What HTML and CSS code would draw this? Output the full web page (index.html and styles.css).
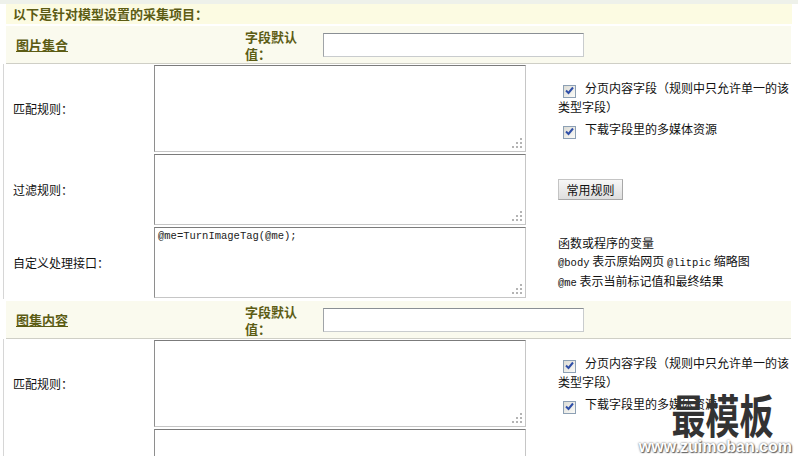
FILE: index.html
```html
<html lang="zh-CN">
<head>
    <meta charset="UTF-8">
    <title>采集项目设置</title>
    <link rel="stylesheet" href="styles.css">
</head>
<body>

    <div class="topo"></div>
    <div class="titulo">以下是针对模型设置的采集项目：</div>

    <!-- 图片集合 -->
    <div class="campo-cab">
        <a class="campo-nome" href="#">图片集合</a>
        <span class="campo-rotulo">字段默认值：</span>
        <input class="campo-input" type="text">
    </div>

    <div class="linha">
        <div class="rotulo">匹配规则：</div>
        <div class="celula"><textarea class="area alta"></textarea></div>
        <div class="extra">
            <p class="opcao"><span class="cb"><svg width="9" height="9" viewBox="0 0 9 9"><path d="M1 4.5 L3.5 7 L8 1.5" fill="none" stroke="#2f4fa8" stroke-width="2"/></svg></span>分页内容字段（规则中只允许单一的该类型字段）</p>
            <p class="opcao"><span class="cb"><svg width="9" height="9" viewBox="0 0 9 9"><path d="M1 4.5 L3.5 7 L8 1.5" fill="none" stroke="#2f4fa8" stroke-width="2"/></svg></span>下载字段里的多媒体资源</p>
        </div>
    </div>

    <div class="linha">
        <div class="rotulo">过滤规则：</div>
        <div class="celula"><textarea class="area"></textarea></div>
        <div class="extra">
            <button class="botao">常用规则</button>
        </div>
    </div>

    <div class="linha">
        <div class="rotulo">自定义处理接口：</div>
        <div class="celula"><textarea class="area">@me=TurnImageTag(@me);</textarea></div>
        <div class="extra dica">
            函数或程序的变量<br>
            <code>@body</code> 表示原始网页 <code>@litpic</code> 缩略图<br>
            <code>@me</code> 表示当前标记值和最终结果
        </div>
    </div>

    <!-- 图集内容 -->
    <div class="campo-cab">
        <a class="campo-nome" href="#">图集内容</a>
        <span class="campo-rotulo">字段默认值：</span>
        <input class="campo-input" type="text">
    </div>

    <div class="linha">
        <div class="rotulo">匹配规则：</div>
        <div class="celula"><textarea class="area alta"></textarea></div>
        <div class="extra">
            <p class="opcao"><span class="cb"><svg width="9" height="9" viewBox="0 0 9 9"><path d="M1 4.5 L3.5 7 L8 1.5" fill="none" stroke="#2f4fa8" stroke-width="2"/></svg></span>分页内容字段（规则中只允许单一的该类型字段）</p>
            <p class="opcao"><span class="cb"><svg width="9" height="9" viewBox="0 0 9 9"><path d="M1 4.5 L3.5 7 L8 1.5" fill="none" stroke="#2f4fa8" stroke-width="2"/></svg></span>下载字段里的多媒体资源</p>
        </div>
    </div>

    <div class="linha">
        <div class="rotulo"></div>
        <div class="celula"><textarea class="area"></textarea></div>
        <div class="extra"></div>
    </div>

    <div class="marca">
        <div class="marca-nome">最模板</div>
        <div class="marca-url">www.zuimoban.com</div>
    </div>

</body>
</html>
```

FILE: styles.css
```css
body {
    margin: 0;
    height: 456px;
    font-family: "Noto Sans CJK SC", "Liberation Sans", sans-serif;
    font-size: 12px;
    color: #111;
    background: #fff;
    overflow: hidden;
}
.topo {
    height: 4px;
    background: #eef1ea;
}
.titulo {
    margin-left: 6px;
    width: 779px;
    height: 20px;
    line-height: 20px;
    padding-left: 7px;
    background: #fcfbe2;
    color: #5c5c14;
    font-size: 13px;
    font-weight: bold;
}
.campo-cab {
    display: flex;
    align-items: center;
    margin: 2px 0 0 6px;
    width: 785px;
    height: 37px;
    background: #fafaee;
    border-bottom: 1px solid #cfcfc6;
    color: #5c5c14;
    font-size: 13px;
    font-weight: bold;
}
.campo-nome {
    width: 229px;
    padding-left: 10px;
    color: #5c5c14;
    text-decoration: underline;
}
.campo-rotulo {
    width: 56px;
    margin-right: 22px;
    line-height: 17px;
}
.campo-input {
    width: 261px;
    height: 24px;
    box-sizing: border-box;
    border: 1px solid;
    border-color: #8a8f94 #c9ccce #c9ccce #a0a4a8;
    background: #fff;
}
.linha {
    display: grid;
    grid-template-columns: 150px 372px 1fr;
    align-items: center;
    margin-left: 3px;
    border-left: 1px solid #d6d6d6;
}
.rotulo {
    padding-left: 9px;
}
.celula {
    display: flex;
}
/* grip de pontinhos no canto, no lugar do padrão do navegador */
.area {
    width: 100%;
    height: 71px;
    margin: 1px 0;
    box-sizing: border-box;
    border: 1px solid;
    border-color: #7b7b7b #c6c6c6 #c6c6c6 #8e8e8e;
    padding: 2px 3px;
    font-family: "Liberation Mono", monospace;
    font-size: 10.5px;
    color: #222;
    resize: none;
    background-color: #fff;
    background-image:
        linear-gradient(#b4b4b4, #b4b4b4),
        linear-gradient(#b4b4b4, #b4b4b4),
        linear-gradient(#b4b4b4, #b4b4b4),
        linear-gradient(#b4b4b4, #b4b4b4),
        linear-gradient(#b4b4b4, #b4b4b4),
        linear-gradient(#b4b4b4, #b4b4b4);
    background-size: 2px 2px;
    background-repeat: no-repeat;
    background-position:
        right 3px bottom 3px,
        right 7px bottom 3px,
        right 11px bottom 3px,
        right 3px bottom 7px,
        right 7px bottom 7px,
        right 3px bottom 11px;
}
.alta {
    height: 87px;
}
.extra {
    padding-left: 32px;
    width: 232px;
    line-height: 18px;
}
.opcao {
    margin: 0;
}
.opcao + .opcao {
    margin-top: 4px;
}
.cb {
    display: inline-block;
    vertical-align: -2px;
    width: 11px;
    height: 11px;
    margin: 0 9px 0 5px;
    border: 1px solid #8da0b4;
    background: linear-gradient(135deg, #dcdcd6, #fbfbf8);
    text-align: center;
    line-height: 11px;
}
.cb svg {
    vertical-align: 0;
}
.botao {
    width: 65px;
    height: 21px;
    padding: 0;
    border: 1px solid #c4c4c4;
    border-right-color: #a8a8a8;
    border-bottom-color: #a8a8a8;
    background: linear-gradient(#f7f7f7, #dedede);
    font-family: "Noto Sans CJK SC", sans-serif;
    font-size: 12px;
    color: #111;
}
.dica code {
    font-family: "Liberation Mono", monospace;
    font-size: 10.5px;
}
.marca {
    position: absolute;
    right: 6px;
    bottom: 0;
    text-align: center;
}
.marca-nome {
    font-size: 34px;
    font-weight: bold;
    color: #333;
    line-height: 40px;
    transform: scaleY(1.35);
    margin: 0 0 4px 14px;
}
.marca-url {
    font-family: "Liberation Sans", sans-serif;
    font-size: 16px;
    font-weight: bold;
    color: #fff;
    text-shadow: 0 0 2px #555, 1px 1px 1px #666;
    line-height: 18px;
}
```
